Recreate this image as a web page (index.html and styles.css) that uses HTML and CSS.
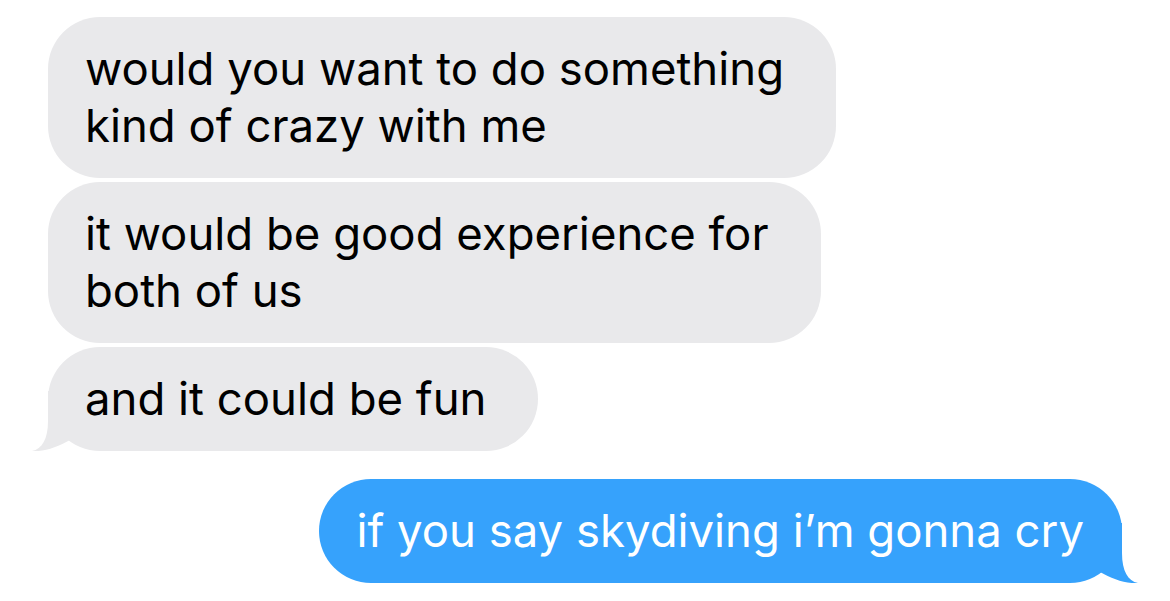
FILE: index.html
```
<!DOCTYPE html>
<html lang="en">
<head>
<meta charset="utf-8">
<title>Messages</title>
<link rel="stylesheet" href="styles.css">
</head>
<body>
<div class="thread">
  <div class="bubble them">would you want to do something<br>kind of crazy with me</div>
  <div class="bubble them">it would be good experience for<br>both of us</div>
  <div class="bubble them last">and it could be fun
    <svg class="tail" viewBox="-16 -60 38 60" aria-hidden="true"><path d="M0 -60 L0 -30 C0 -12 -6 -2 -16 0 C-4 1 10 -4 22 -11 L22 -60 Z"/></svg>
  </div>
  <div class="bubble me last">if you say skydiving i’m gonna cry
    <svg class="tail" viewBox="-16 -60 38 60" aria-hidden="true"><path d="M0 -60 L0 -30 C0 -12 -6 -2 -16 0 C-4 1 10 -4 22 -11 L22 -60 Z"/></svg>
  </div>
</div>
</body>
</html>
```
FILE: styles.css
```
html, body {
  margin: 0;
  padding: 0;
  background: #ffffff;
}
.thread {
  width: 1170px;
  height: 601px;
  box-sizing: border-box;
  padding: 17px 0 0 48px;
  display: flex;
  flex-direction: column;
  align-items: flex-start;
  gap: 4px;
  font-family: Inter, "Liberation Sans", sans-serif;
  font-size: 45.5px;
  line-height: 57px;
  letter-spacing: 0;
}
.bubble {
  position: relative;
  white-space: nowrap;
  padding: 23px 52px 24px 37px;
  border-radius: 52px;
}
.them {
  background: #e9e9eb;
  color: #000000;
}
.me {
  background: #36a2fc;
  color: #ffffff;
  align-self: flex-end;
  margin-right: 48px;
  margin-top: 24px;
  padding: 23px 38px 24px 37px;
}
.tail {
  position: absolute;
  bottom: 0;
  left: -16px;
  width: 38px;
  height: 60px;
}
.them .tail path { fill: #e9e9eb; }
.me .tail {
  left: auto;
  right: -16px;
  transform: scaleX(-1);
}
.me .tail path { fill: #36a2fc; }
```
